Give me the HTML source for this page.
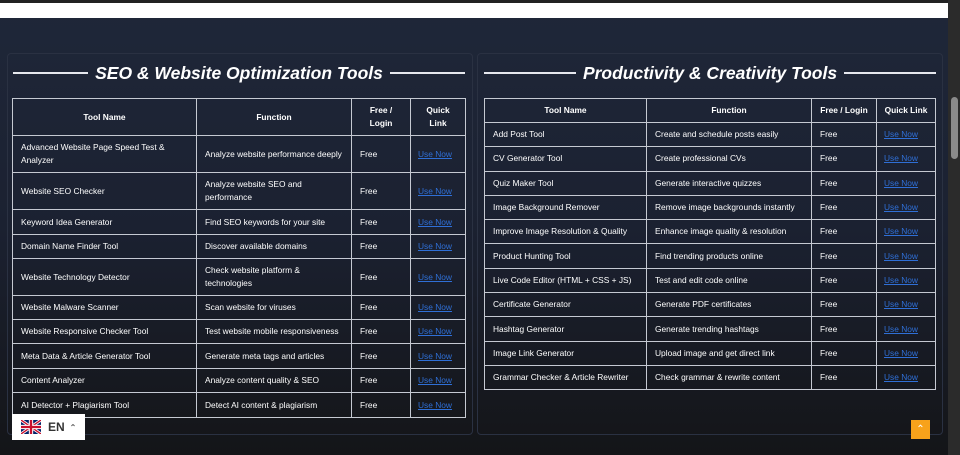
<!DOCTYPE html>
<html><head><meta charset="utf-8"><style>
*{margin:0;padding:0;box-sizing:border-box}
body{width:960px;height:455px;overflow:hidden;font-family:"Liberation Sans",sans-serif;background:linear-gradient(180deg,#1f2739 0%,#1b2131 50%,#141518 100%);position:relative;color:#fff}
.topdark{position:absolute;left:0;top:0;width:960px;height:3px;background:#222}
.topbar{position:absolute;left:0;top:3px;width:948px;height:15px;background:#fff}
.sb{position:absolute;right:0;top:0;width:12px;height:455px;background:#2b2b2b}
.thumb{position:absolute;right:2px;top:97px;width:7px;height:62px;background:#8a8a8a;border-radius:4px}
.card{position:absolute;top:53px;height:382px;border:1px solid #2a3142;border-radius:4px}
.title{position:absolute;top:62px;height:22px;display:flex;align-items:center;gap:7px}
.title .l{flex:1;height:2px;background:#e6e8ee}
.title span{font-weight:bold;font-style:italic;font-size:17.5px;white-space:nowrap}
table{position:absolute;border-collapse:collapse;font-size:8.4px;top:98px;table-layout:fixed}
td,th{border:1px solid #c5c9d2;padding:0 8px;vertical-align:middle;line-height:13px}
th{text-align:center;font-weight:bold}
.r th{white-space:nowrap;padding:0 2px}
a{color:#2f6fd6;text-decoration:underline}
td:last-child{padding-left:7px}
.en{position:absolute;left:12px;top:414px;width:73px;height:26px;background:#fff;display:flex;align-items:center;padding-left:9px;color:#333;font-weight:bold;font-size:12px}
.up{position:absolute;left:911px;top:420px;width:19px;height:19px;background:#f7a21b;color:#fff;font-size:10px;text-align:center;line-height:19px}
</style></head><body>
<div class="topdark"></div><div class="topbar"></div>
<div class="card" style="left:7px;width:466px"></div>
<div class="card" style="left:477px;width:466px"></div>
<div class="title" style="left:13px;width:452px"><div class="l"></div><span>SEO &amp; Website Optimization Tools</span><div class="l"></div></div>
<div class="title" style="left:484px;width:452px"><div class="l"></div><span>Productivity &amp; Creativity Tools</span><div class="l"></div></div>
<table style="left:12px;width:453px">
<colgroup><col style="width:184px"><col style="width:155px"><col style="width:59px"><col style="width:55px"></colgroup>
<tr style="height:37px"><th>Tool Name</th><th>Function</th><th>Free /<br>Login</th><th>Quick<br>Link</th></tr>
<tr style="height:37px"><td>Advanced Website Page Speed Test &amp; Analyzer</td><td>Analyze website performance deeply</td><td>Free</td><td><a>Use Now</a></td></tr>
<tr style="height:37px"><td>Website SEO Checker</td><td>Analyze website SEO and performance</td><td>Free</td><td><a>Use Now</a></td></tr>
<tr style="height:25px"><td>Keyword Idea Generator</td><td>Find SEO keywords for your site</td><td>Free</td><td><a>Use Now</a></td></tr>
<tr style="height:24px"><td>Domain Name Finder Tool</td><td>Discover available domains</td><td>Free</td><td><a>Use Now</a></td></tr>
<tr style="height:37px"><td>Website Technology Detector</td><td>Check website platform &amp; technologies</td><td>Free</td><td><a>Use Now</a></td></tr>
<tr style="height:24px"><td>Website Malware Scanner</td><td>Scan website for viruses</td><td>Free</td><td><a>Use Now</a></td></tr>
<tr style="height:24px"><td>Website Responsive Checker Tool</td><td>Test website mobile responsiveness</td><td>Free</td><td><a>Use Now</a></td></tr>
<tr style="height:25px"><td>Meta Data &amp; Article Generator Tool</td><td>Generate meta tags and articles</td><td>Free</td><td><a>Use Now</a></td></tr>
<tr style="height:24px"><td>Content Analyzer</td><td>Analyze content quality &amp; SEO</td><td>Free</td><td><a>Use Now</a></td></tr>
<tr style="height:25px"><td>AI Detector + Plagiarism Tool</td><td>Detect AI content &amp; plagiarism</td><td>Free</td><td><a>Use Now</a></td></tr>
</table>
<table class="r" style="left:484px;width:451px">
<colgroup><col style="width:162px"><col style="width:165px"><col style="width:65px"><col style="width:59px"></colgroup>
<tr style="height:24px"><th>Tool Name</th><th>Function</th><th>Free / Login</th><th>Quick Link</th></tr>
<tr style="height:24.3px"><td>Add Post Tool</td><td>Create and schedule posts easily</td><td>Free</td><td><a>Use Now</a></td></tr>
<tr style="height:24.3px"><td>CV Generator Tool</td><td>Create professional CVs</td><td>Free</td><td><a>Use Now</a></td></tr>
<tr style="height:24.3px"><td>Quiz Maker Tool</td><td>Generate interactive quizzes</td><td>Free</td><td><a>Use Now</a></td></tr>
<tr style="height:24.3px"><td>Image Background Remover</td><td>Remove image backgrounds instantly</td><td>Free</td><td><a>Use Now</a></td></tr>
<tr style="height:24.3px"><td>Improve Image Resolution &amp; Quality</td><td>Enhance image quality &amp; resolution</td><td>Free</td><td><a>Use Now</a></td></tr>
<tr style="height:24.3px"><td>Product Hunting Tool</td><td>Find trending products online</td><td>Free</td><td><a>Use Now</a></td></tr>
<tr style="height:24.3px"><td>Live Code Editor (HTML + CSS + JS)</td><td>Test and edit code online</td><td>Free</td><td><a>Use Now</a></td></tr>
<tr style="height:24.3px"><td>Certificate Generator</td><td>Generate PDF certificates</td><td>Free</td><td><a>Use Now</a></td></tr>
<tr style="height:24.3px"><td>Hashtag Generator</td><td>Generate trending hashtags</td><td>Free</td><td><a>Use Now</a></td></tr>
<tr style="height:24.3px"><td>Image Link Generator</td><td>Upload image and get direct link</td><td>Free</td><td><a>Use Now</a></td></tr>
<tr style="height:24.3px"><td>Grammar Checker &amp; Article Rewriter</td><td>Check grammar &amp; rewrite content</td><td>Free</td><td><a>Use Now</a></td></tr>
</table>
<div class="en"><svg width="20" height="14" viewBox="0 0 60 42"><rect width="60" height="42" fill="#012169"/><path d="M0 0L60 42M60 0L0 42" stroke="#fff" stroke-width="9"/><path d="M0 0L60 42M60 0L0 42" stroke="#C8102E" stroke-width="4"/><path d="M30 0V42M0 21H60" stroke="#fff" stroke-width="13"/><path d="M30 0V42M0 21H60" stroke="#C8102E" stroke-width="7"/></svg><span style="margin-left:7px">EN</span><span style="margin-left:5px;font-size:8px;color:#666">&#8963;</span></div>
<div class="up">&#8963;</div>
<div class="sb"><div class="thumb"></div></div>
</body></html>
